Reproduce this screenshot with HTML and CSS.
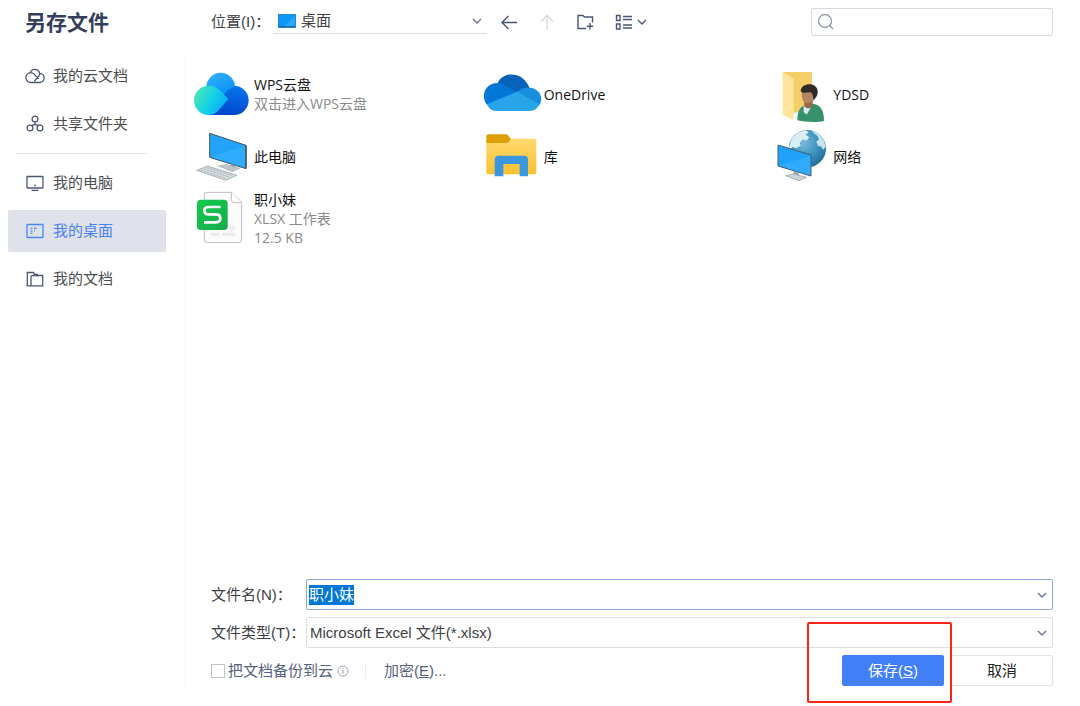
FILE: index.html
```html
<!DOCTYPE html>
<html lang="zh-CN">
<head>
<meta charset="utf-8">
<title>另存文件</title>
<link rel="stylesheet" href="styles.css">
</head>
<body>
<div class="dialog">
  <aside class="sidebar">
    <h1 class="title">另存文件</h1>
    <nav class="places">
      <a class="place" href="#cloud">
        <svg class="place-icon" viewBox="0 0 20 20"><path d="M5.700 16.500a4.900 4.900 0 1 1 3.400-8.400l4.600 4.600M5.100 6.900a5 5 0 0 1 9.500-.1c.4 1.400 0 2.300-.8 3.300l-4.500 5.200M5.700 16.500h8.600a4.600 4.600 0 0 0 .4-9.200"/></svg>
        <span>我的云文档</span></a>
      <a class="place" href="#shared">
        <svg class="place-icon" viewBox="0 0 20 20"><circle cx="10" cy="5" r="2.900"/><circle cx="5" cy="14" r="2.900"/><circle cx="15" cy="14" r="2.900"/><path d="M10 8v2.500M6.600 11.600L10 10.300l3.400 1.300"/></svg>
        <span>共享文件夹</span></a>
      <hr class="places-rule">
      <a class="place" href="#computer">
        <svg class="place-icon" viewBox="0 0 20 20"><rect x="2" y="3.500" width="16" height="11.500" rx=".5"/><path d="M6.500 17.300h7M9.200 12.500h1.600"/></svg>
        <span>我的电脑</span></a>
      <a class="place place-active" href="#desktop" aria-current="page">
        <svg class="place-icon" viewBox="0 0 20 20"><rect x="2" y="3.500" width="16" height="13" rx=".5"/><path d="M5.500 7.300h2M9 7.300h2.500M5.500 9.800h2M9 9.800h1M5.500 12.300h2"/></svg>
        <span>我的桌面</span></a>
      <a class="place" href="#documents">
        <svg class="place-icon" viewBox="0 0 20 20"><path d="M5.500 16.800H2.300V3.500h6l1.500 1.800h3.400M6 16.800V8q0-1.500 1.500-1.500h10.200v10.300z"/></svg>
        <span>我的文档</span></a>
    </nav>
  </aside>

  <main class="main">
    <header class="toolbar">
      <label class="toolbar-label" for="location">位置(I)：</label>
      <div class="location">
        <svg class="location-icon" viewBox="0 0 18 14"><rect x=".5" y=".5" width="17" height="13" fill="#0c98fb" stroke="#2786c7"/><path d="M5 13L17 2v11z" fill="#27a9ff"/><path d="M1 12.500h16" stroke="#1665a8"/></svg>
        <select class="location-select" id="location"><option>桌面</option></select>
        <svg class="chevron" viewBox="0 0 10 10"><path d="M1 3l4 4 4-4"/></svg>
      </div>
      <div class="tools">
        <button class="tool" type="button" aria-label="后退"><svg viewBox="0 0 20 20"><path d="M18 10.500H3M9.500 4L3 10.500 9.500 17"/></svg></button>
        <button class="tool tool-faint" type="button" aria-label="向上"><svg viewBox="0 0 20 20"><path d="M10 18V3.500M4 9.500l6-6 6 6"/></svg></button>
        <button class="tool" type="button" aria-label="新建文件夹"><svg viewBox="0 0 20 20"><path d="M11 16.500H3v-13h5l1.500 1.500h8v5.500M15 11v6.500M11.800 14.200h6.400"/></svg></button>
        <button class="tool" type="button" aria-label="视图"><svg viewBox="0 0 20 20"><path d="M3.500 3.500h3.500v5H3.500zM3.500 12h3.500v5H3.500zM10 4.500h9M10 7.500h9M10 13h9M10 16h9"/></svg><svg class="tool-chevron" viewBox="0 0 10 10"><path d="M1 3l4 4 4-4"/></svg></button>
      </div>
      <div class="search">
        <svg class="search-icon" viewBox="0 0 18 18"><circle cx="8" cy="8" r="6.500"/><path d="M12.500 12.500l3.500 3.500"/></svg>
        <input class="search-input" type="search" aria-label="搜索">
      </div>
    </header>

    <ul class="files">
      <li class="file">
        <svg class="file-icon" viewBox="27 9 180 186">
          <defs>
            <linearGradient id="wpsTop" x1="0" y1="0" x2=".6" y2="1"><stop offset="0" stop-color="#35b5ff"/><stop offset="1" stop-color="#078df7"/></linearGradient>
            <linearGradient id="wpsLeft" x1="0" y1=".2" x2="1" y2=".7"><stop offset="0" stop-color="#4be9b3"/><stop offset=".55" stop-color="#12cfe7"/><stop offset="1" stop-color="#05a5f8"/></linearGradient>
            <linearGradient id="wpsRight" x1=".7" y1="0" x2=".5" y2="1"><stop offset="0" stop-color="#0877ee"/><stop offset="1" stop-color="#0246cc"/></linearGradient>
          </defs>
          <path d="M72 165L100 85l47-8a44 44 0 0 1 0 88z" fill="url(#wpsRight)"/>
          <path d="M64 82a43 43 0 0 1 86-1c-9 0-20 8-27 16l-14 16z" fill="url(#wpsTop)"/>
          <path d="M72 77c15 0 25 6 33 14l25 26-28 32c-8 10-19 16-32 16a44 44 0 1 1 2-88z" fill="url(#wpsLeft)"/>
        </svg>
        <div class="file-text"><span>WPS云盘</span><span class="file-meta">双击进入WPS云盘</span></div>
      </li>
      <li class="file">
        <svg class="file-icon" viewBox="39 9 180 186">
          <path d="M80 70C92 34 156 30 176 85l-38 12-50-12z" fill="#0463b8"/>
          <path d="M48 134C28 112 40 64 86 69l52 27-70 46z" fill="#0377d5"/>
          <path d="M138 95c10-8 24-13 38-12 34 3 42 36 28 54l-44 2z" fill="#168ddd"/>
          <path d="M48 133l90-38 67 38c-6 13-15 20-29 20H76c-13 0-23-7-28-20z" fill="#28a5e9"/>
        </svg>
        <div class="file-text"><span>OneDrive</span></div>
      </li>
      <li class="file">
        <svg class="file-icon" viewBox="24 9 180 186">
          <path d="M53 36h88v125H85z" fill="#f5ce68"/>
          <path d="M53 36l33 21v124l-33-17z" fill="#ffe49c"/>
          <path d="M86 158l20-3v17l-20 9z" fill="#f7f7f7"/>
          <path d="M97 181c0-20 5-37 18-44l31-6c20 4 31 18 31 52-22 5-57 3-80-2z" fill="#369369"/>
          <path d="M116 136l27-3-18 31-9-8z" fill="#dcebf1"/>
          <path d="M117 117h26v20c-7 10-20 10-25 2z" fill="#956a46"/>
          <path d="M111 92c3-8 11-10 23-8 12 2 15 12 12 23-3 17-10 23-20 23-13-1-17-15-15-38z" fill="#b28660"/>
          <path d="M107 94c0-25 49-31 51 0 1 14-7 21-13 28-1-11 0-16-6-24-9-3-16 2-26 0z" fill="#2e2b29"/>
        </svg>
        <div class="file-text"><span>YDSD</span></div>
      </li>
      <li class="file">
        <svg class="file-icon" viewBox="27 195 180 186">
          <path d="M74 220l109 36v70L74 292z" fill="#21a4fa" stroke="#40596a" stroke-width="3"/>
          <path d="M77 290L180 258v64z" fill="#47b9ff" opacity=".4"/>
          <path d="M181 255l4 2v68l-4 2z" fill="#45525a"/>
          <path d="M137 311l14 5v13h-14z" fill="#8e999f"/>
          <path d="M99 318l25-5 41 12-23 10z" fill="#bac4c8" stroke="#89959b"/>
          <path d="M35 331l33-13 88 28-34 15z" fill="#d5dbde" stroke="#8c979d" stroke-width="2"/>
          <path d="M47 331l74 24M57 327l75 24M66 323l77 24" stroke="#9aa5ab" stroke-width="2" stroke-dasharray="7 3" fill="none"/>
        </svg>
        <div class="file-text"><span>此电脑</span></div>
      </li>
      <li class="file">
        <svg class="file-icon" viewBox="41 195 180 186">
          <defs><linearGradient id="folder" x1="0" y1="0" x2="0" y2="1"><stop offset="0" stop-color="#ffd970"/><stop offset="1" stop-color="#fac131"/></linearGradient></defs>
          <path d="M48 240h66l10-4h68q6 0 6 6v95q0 6-6 6H54q-6 0-6-6z" fill="url(#folder)"/>
          <path d="M48 249v-20q0-6 6-6h53q4 0 7 4l8 10-8 9q-3 3-7 3z" fill="#dda000"/>
          <path d="M73 349v-50q0-12 12-12h76q12 0 12 12v50h-25v-37H99v37z" fill="#3997dd"/>
        </svg>
        <div class="file-text"><span>库</span></div>
      </li>
      <li class="file">
        <svg class="file-icon" viewBox="24 195 180 186">
          <defs><radialGradient id="globe" cx=".4" cy=".35" r=".7"><stop offset="0" stop-color="#75b9d9"/><stop offset=".6" stop-color="#388fba"/><stop offset="1" stop-color="#206995"/></radialGradient></defs>
          <circle cx="127" cy="266" r="56" fill="url(#globe)"/>
          <path d="M80 237c12-16 25-24 43-26l8 6-9 7 11 8-9 10-10-4-10 10 3 9-15 8-9-5-7 10-5-6z" fill="#dceef5"/>
          <path d="M146 219l-6-5c17 2 29 12 37 28l5 19-7 8-8-10-8-1-5-13 8-7-5-10z" fill="#c7e3ee"/>
          <path d="M39 255l99 30v63l-99-30z" fill="#20a2fa" stroke="#465f70" stroke-width="3"/>
          <path d="M42 316l94-29v58z" fill="#48b8ff" opacity=".4"/>
          <path d="M85 333l17 5v13H85z" fill="#9da8ae"/>
          <path d="M61 347l25-5 39 10-23 10z" fill="#ccd4d8" stroke="#929da3" stroke-width="2"/>
        </svg>
        <div class="file-text"><span>网络</span></div>
      </li>
      <li class="file">
        <svg class="file-icon" viewBox="27 381 180 186">
          <defs><linearGradient id="sheet" x1="0" y1="0" x2="1" y2="1"><stop offset="0" stop-color="#12cc4b"/><stop offset="1" stop-color="#17a94e"/></linearGradient></defs>
          <path d="M66 397h74l30 30v112q0 9-9 9H67q-9 0-9-9V406q0-9 8-9z" fill="#fcfcfd" stroke="#b9bdc5" stroke-width="3"/>
          <path d="M139 397v22q0 9 9 9h22" fill="#fff" stroke="#b9bdc5" stroke-width="3"/>
          <path d="M134 504h17M77 523h26M111 523h40" stroke="#e9ebee" stroke-width="10"/>
          <rect x="36" y="419" width="92" height="91" rx="11" fill="url(#sheet)"/>
          <path d="M107 441H72q-14 0-14 11t14 11h20q14 0 14 12t-14 12H57" fill="none" stroke="#fff" stroke-width="8"/>
        </svg>
        <div class="file-text"><span>职小妹</span><span class="file-meta">XLSX 工作表</span><span class="file-meta">12.5 KB</span></div>
      </li>
    </ul>

    <form class="save-form">
      <label class="field-label" for="filename">文件名(N)：</label>
      <div class="field field-focus">
        <input class="field-control name-input" id="filename" type="text" value="职小妹" autocomplete="off">
        <svg class="chevron" viewBox="0 0 10 10"><path d="M1 3l4 4 4-4"/></svg>
      </div>
      <label class="field-label" for="filetype">文件类型(T)：</label>
      <div class="field">
        <select class="field-control" id="filetype"><option>Microsoft Excel 文件(*.xlsx)</option></select>
        <svg class="chevron" viewBox="0 0 10 10"><path d="M1 3l4 4 4-4"/></svg>
      </div>
      <div class="actions">
        <label class="backup"><input class="backup-box" type="checkbox"><span>把文档备份到云</span></label>
        <svg class="info" viewBox="0 0 12 12"><circle cx="6" cy="6" r="5"/><path d="M6 5v4M6 2.800v1.200"/></svg>
        <button class="encrypt" type="button">加密(<u>E</u>)...</button>
        <div class="buttons">
          <div class="highlight"><button class="button button-primary" type="button">保存(<u>S</u>)</button></div>
          <button class="button" type="button">取消</button>
        </div>
      </div>
    </form>
  </main>
</div>
<script src="script.js"></script>
</body>
</html>
```
FILE: styles.css
```css
* { box-sizing: border-box; }

body {
  margin: 0;
  background: #fff;
  color: #3d3f45;
  font: 15px/20px "Liberation Sans", "Noto Sans CJK SC", sans-serif;
}

button, input, select { font: inherit; color: inherit; }

svg { display: block; flex: none; fill: none; overflow: visible; }

.dialog {
  display: grid;
  grid-template-columns: 186px 1fr;
  min-height: 100vh;
}

/* Sidebar */
.sidebar { display: flex; flex-direction: column; padding-bottom: 19px; }

.title {
  margin: 0;
  padding: 8px 25px 0;
  height: 55px;
  color: #333f5a;
  font-size: 21px;
  line-height: 30px;
}

.places {
  display: flex;
  flex: 1;
  flex-direction: column;
  gap: 6px;
  padding: 0 19px 0 8px;
  border-right: 1px solid #f5f5f6;
}

.place {
  display: flex;
  align-items: center;
  gap: 8px;
  height: 42px;
  padding-left: 17px;
  border-radius: 2px;
  color: #4c4e52;
  text-decoration: none;
}

.place-icon { width: 20px; height: 20px; stroke: #4b5672; stroke-width: 1.3; }
.place-active { background: #dfe2ea; color: #4a80f5; }
.place-active .place-icon { stroke: #4a86f8; }

.places-rule {
  width: 131px;
  height: 1px;
  margin: 2px 8px;
  border: 0;
  background: #e6e6e8;
}

/* Toolbar */
.main { display: flex; flex-direction: column; min-width: 0; }

.toolbar {
  display: flex;
  align-items: center;
  height: 43px;
  padding: 0 27px 0 25px;
}

.toolbar-label { width: 62px; white-space: nowrap; }

.location {
  display: flex;
  align-items: center;
  position: relative;
  width: 214px;
  height: 24px;
  border-bottom: 1px solid #d9dbde;
}

.location-icon { position: absolute; left: 5px; width: 18px; height: 14px; pointer-events: none; }

.location-select {
  appearance: none;
  width: 100%;
  padding: 0 24px 0 28px;
  border: 0;
  background: none;
}

.chevron {
  position: absolute;
  right: 5px;
  width: 10px;
  height: 10px;
  stroke: #697493;
  stroke-width: 1.4;
  pointer-events: none;
}

.tools { display: flex; gap: 18px; margin-left: 12px; }

.tool {
  display: flex;
  align-items: center;
  gap: 4px;
  padding: 0;
  border: 0;
  background: none;
  stroke: #4b5672;
  stroke-width: 1.4;
}

.tool svg { width: 20px; height: 20px; }
.tool .tool-chevron { width: 10px; height: 10px; }
.tool-faint { stroke: #d4d7de; }

.search {
  display: flex;
  align-items: center;
  position: relative;
  width: 242px;
  height: 28px;
  margin-left: auto;
}

.search-icon { position: absolute; left: 6px; width: 18px; height: 18px; stroke: #949eae; stroke-width: 1.4; }

.search-input {
  width: 100%;
  height: 100%;
  padding: 0 8px 0 30px;
  border: 1px solid #d6d8dc;
  border-radius: 2px;
  background: none;
}

/* File list */
.files {
  display: grid;
  flex: 1;
  grid-template-columns: repeat(3, 1fr);
  grid-auto-rows: 62px;
  margin: 0;
  padding: 20px 17px 0 8px;
  list-style: none;
}

.file {
  display: flex;
  align-items: center;
  color: #111;
  font: 14px/19px "Open Sans", "Noto Sans CJK SC", sans-serif;
}

.file-icon { width: 60px; height: 62px; }
.file-text { display: flex; flex-direction: column; white-space: nowrap; }
.file-meta { color: #8a8a8a; }

/* Save form */
.save-form {
  display: grid;
  grid-template-columns: 95px 1fr;
  align-items: center;
  row-gap: 7px;
  padding: 0 27px 20px 25px;
}

.field-label { white-space: nowrap; }

.field {
  display: flex;
  align-items: center;
  position: relative;
  height: 31px;
  border: 1px solid #dcdee1;
  border-radius: 2px;
}

.field-focus { border-color: #8aa9dc; }

.field-control {
  appearance: none;
  width: 100%;
  padding: 0 24px 0 3px;
  border: 0;
  outline: 0;
  background: none;
}

.name-input { padding-left: 2px; caret-color: transparent; }
.name-input::selection { background: #0078d7; color: #fff; }

.actions {
  display: flex;
  grid-column: 1 / -1;
  align-items: center;
  height: 31px;
  color: #56617d;
}

.backup { display: flex; align-items: center; gap: 3px; }

.backup-box {
  appearance: none;
  width: 14px;
  height: 14px;
  margin: 0;
  border: 1px solid #bfc3cb;
  background: #fff;
}

.info { width: 12px; height: 12px; margin-left: 4px; stroke: #a0a5b2; }

.encrypt {
  height: 16px;
  margin-left: 16px;
  padding: 0 0 0 18px;
  border: 0;
  border-left: 1px solid #ededf0;
  background: none;
  line-height: 16px;
}

.buttons { display: flex; gap: 7px; margin-left: auto; }

.button {
  width: 102px;
  height: 31px;
  padding: 0;
  border: 1px solid #dfe1e5;
  border-radius: 2px;
  background: #fff;
  color: #222;
}

.button-primary { border-color: #417ff9; background: #417ff9; color: #fff; }

.highlight { position: relative; }

.highlight::after {
  content: "";
  position: absolute;
  inset: -33px -8px -17px -35px;
  border: 2px solid #fb2418;
  border-radius: 2px;
  pointer-events: none;
}
```
FILE: script.js
```js
const nameInput = document.getElementById("filename");
nameInput.focus();
nameInput.select();
```
